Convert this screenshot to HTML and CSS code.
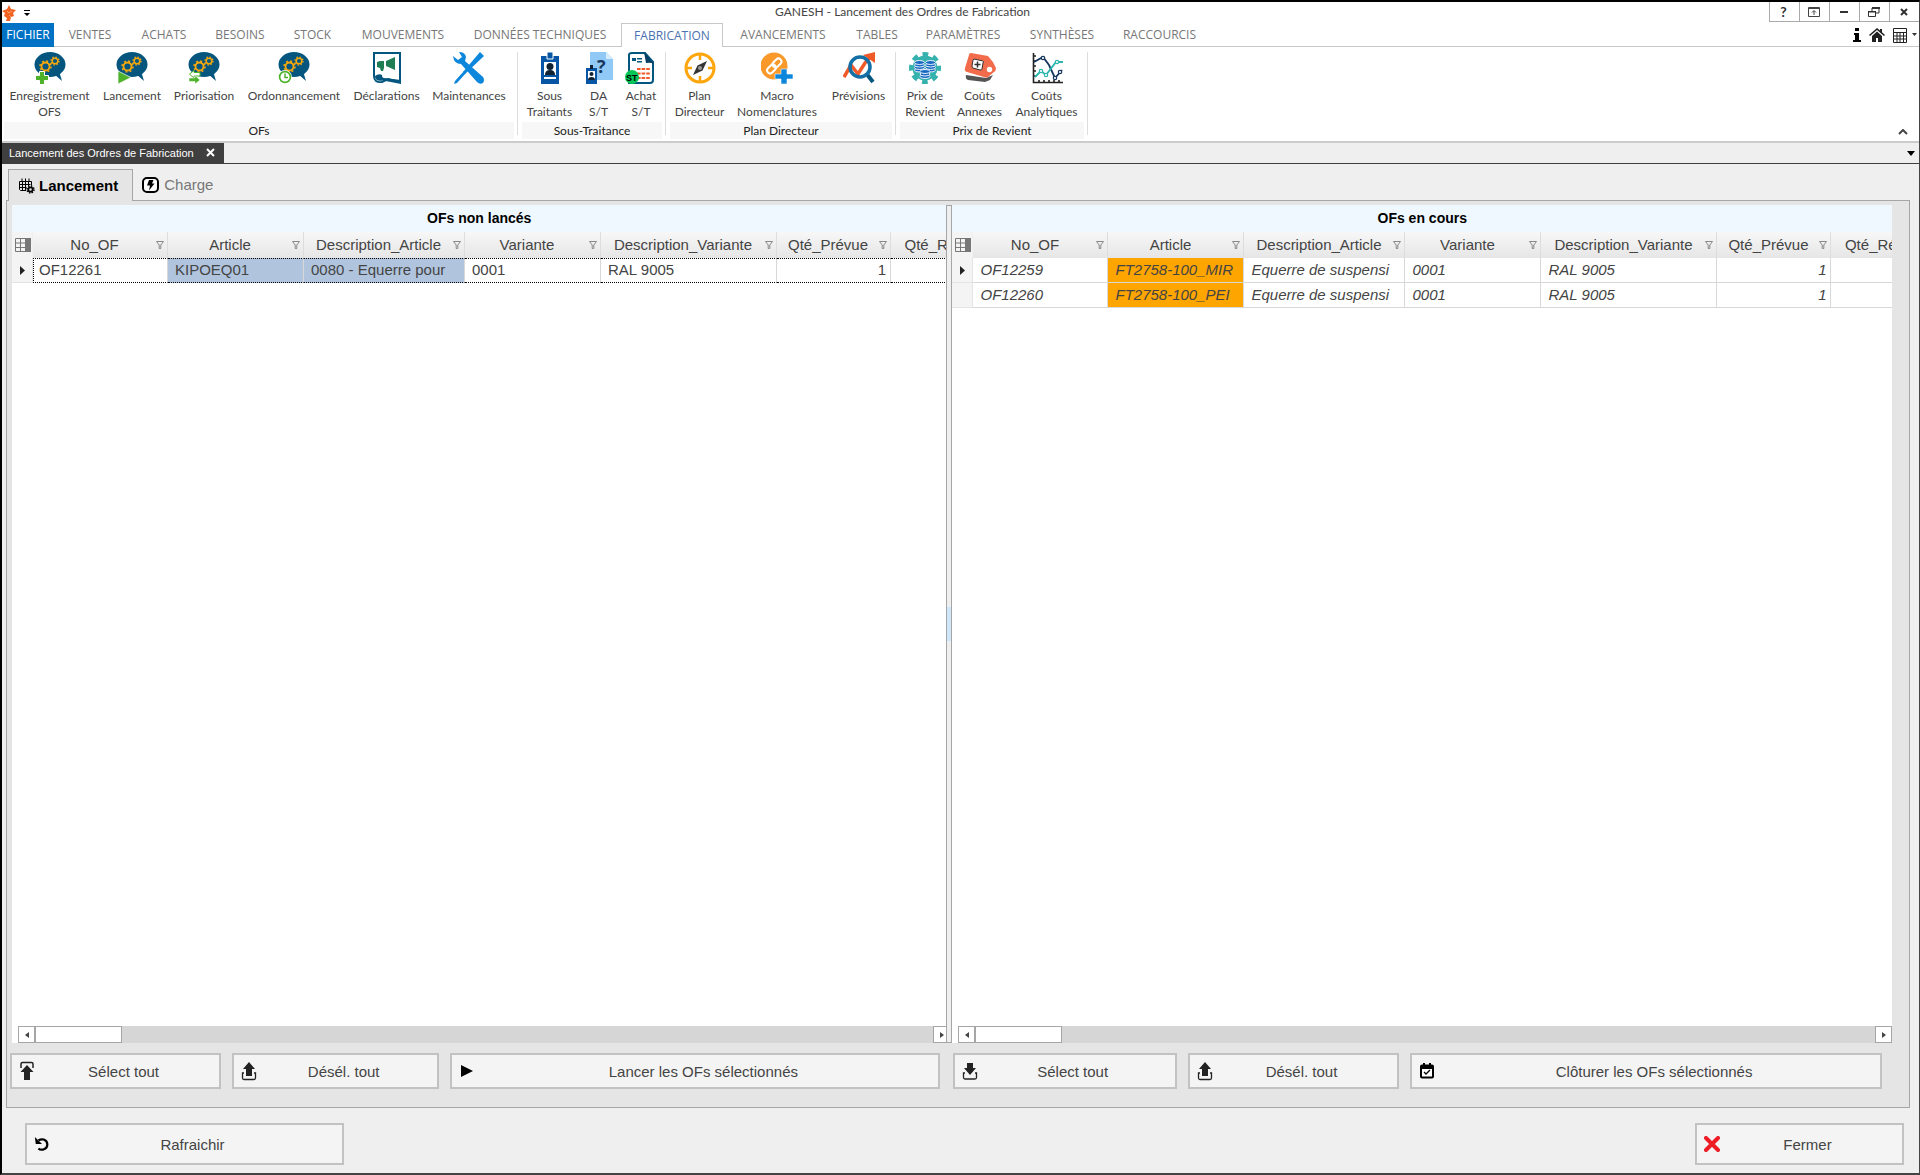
FILE: index.html
```html
<!DOCTYPE html>
<html lang="fr">
<head>
<meta charset="utf-8">
<title>GANESH - Lancement des Ordres de Fabrication</title>
<link rel="stylesheet" href="styles.css">
</head>
<body>
<svg class="defs" aria-hidden="true">
  <symbol id="bubble" viewBox="0 0 32 32">
    <ellipse cx="16" cy="12.500" rx="15.500" ry="12.500" fill="#04567f"/>
    <path d="M20 22l8 7-3-10z" fill="#04567f"/>
    <g fill="none" stroke="#f9a80c"><circle cx="11.500" cy="14.500" r="4" stroke-width="1.800"/><circle cx="11.500" cy="14.500" r="5.500" stroke-width="1.500" stroke-dasharray="2 2.320"/><circle cx="21" cy="9" r="2.800" stroke-width="1.500"/><circle cx="21" cy="9" r="4" stroke-width="1.300" stroke-dasharray="1.500 1.640"/></g>
  </symbol>
  <symbol id="filter" viewBox="0 0 8 8"><path d="M.5.500h7L4.800 4v3.500H3.200V4z" fill="none" stroke="#888"/></symbol>
  <symbol id="grid" viewBox="0 0 16 14"><path d="M11 0h5v14h-5z" fill="#777"/><path d="M.5.500h14v13H.500zM.500 5h11M.500 9.500h11M5.500.500v13M10.500.500v13" fill="none" stroke="#777"/></symbol>
  <symbol id="up" viewBox="0 0 16 20"><path d="M8 1l6 7h-3v7H5V8H2z" fill="#222"/><path d="M3 12H1.500v5q0 1.500 1.500 1.500h10q1.500 0 1.500-1.500v-5H13" fill="none" stroke="#222" stroke-width="1.300"/></symbol>
</svg>
<div class="window">
  <header class="titlebar">
    <div class="quick">
      <svg width="14" height="16" viewBox="0 0 14 16"><path d="M7 0l2 4 5 1-3 3 1 3-3 1-1 4H4l1-3-3-2 1-3-3-2 5-2z" fill="#f26322"/><path d="M5 6l2 2 3-2M7 10l2 2" stroke="#fba06b" fill="none"/></svg>
      <svg width="6" height="6" viewBox="0 0 6 6"><path d="M0 0h6v1H0zM0 3h6L3 6z"/></svg>
    </div>
    <h1>GANESH - Lancement des Ordres de Fabrication</h1>
    <div class="winbtns">
      <button aria-label="Aide">?</button>
      <button aria-label="Options du ruban"><svg width="12" height="10" viewBox="0 0 12 10"><path d="M.5.500h11v9H.500zM.500 1.500h11M6 8V4M4 5.500l2-2 2 2" fill="none" stroke="#444"/></svg></button>
      <button aria-label="Réduire"><svg width="8" height="10"><path d="M0 4h8v2H0z" fill="#333"/></svg></button>
      <button aria-label="Restaurer"><svg width="12" height="10" viewBox="0 0 12 10"><path d="M.5 4.500h7v5h-7zM4 4V1h7v5H8" fill="none" stroke="#333"/><path d="M4 0h8v2H4zM0 4h8v1.500H0z" fill="#333"/></svg></button>
      <button aria-label="Fermer la fenêtre"><svg width="8" height="8"><path d="M1 1l6 6M7 1L1 7" stroke="#333" stroke-width="2"/></svg></button>
    </div>
  </header>

  <nav class="menu">
    <button class="file">FICHIER</button><button>VENTES</button><button>ACHATS</button><button>BESOINS</button><button>STOCK</button><button>MOUVEMENTS</button><button>DONNÉES TECHNIQUES</button><button class="active">FABRICATION</button><button>AVANCEMENTS</button><button>TABLES</button><button>PARAMÈTRES</button><button>SYNTHÈSES</button><button>RACCOURCIS</button>
    <div class="tools">
      <svg width="8" height="14" viewBox="0 0 8 14"><path d="M2 0h4v3H2zM1 5h5v7h2v2H0v-2h2V7H1z"/></svg>
      <svg width="16" height="14" viewBox="0 0 16 14"><path d="M8 0L0 7l1 1 7-6 7 6 1-1-3-2.700V1h-2v1.600z" fill="#222"/><path d="M8 3.500L3 8v6h4v-4h2v4h4V8z" fill="#222"/></svg>
      <svg width="14" height="15" viewBox="0 0 14 15"><path d="M.5.500h13v14H.500zM.500 4.500h13M.500 8h13M.500 11h13M4 4.500v10M7 4.500v10M10.500 4.500v10" fill="none" stroke="#222"/></svg>
      <svg class="caret" width="5" height="4"><path d="M0 0h5L2.500 3z" fill="#333"/></svg>
    </div>
  </nav>

  <section class="ribbon">
    <div class="group g-ofs">
      <div class="tiles">
        <button><svg class="ico" viewBox="0 0 32 32"><use href="#bubble"/><path d="M5.500 19.500h5v4h4v5h-4v4h-5v-4h-4v-5h4z" fill="#4eb32b" stroke="#fff"/></svg>Enregistrement<br>OFS</button>
        <button><svg class="ico" viewBox="0 0 32 32"><use href="#bubble"/><path d="M2 19l13 6.500L2 32z" fill="#4eb32b" stroke="#fff" stroke-width=".7"/></svg>Lancement</button>
        <button><svg class="ico" viewBox="0 0 32 32"><use href="#bubble"/><path d="M12 20.500H6v-2l-4.500 3.700L6 26v-2h6z" fill="#fff" stroke="#4eb32b"/><path d="M1 26h6v-2.500l5 4.500-5 4v-2.500H1z" fill="#4eb32b" stroke="#fff" stroke-width=".5"/></svg>Priorisation</button>
        <button><svg class="ico" viewBox="0 0 32 32"><use href="#bubble"/><circle cx="7" cy="25" r="6.900" fill="#fff"/><circle cx="7" cy="25" r="5.400" fill="#fff" stroke="#4eb32b" stroke-width="1.700"/><path d="M7 21.500V25.500h3" fill="none" stroke="#4eb32b" stroke-width="1.500"/></svg>Ordonnancement</button>
        <button><svg class="ico" viewBox="0 0 32 32"><path d="M3 1h26v29l-12-3-6 3q-8 1-8-6z" fill="#fff" stroke="#04567f" stroke-width="2"/><path d="M4 24q4-3 7-1 0 3 2 3l17 2v4l-18-3.500Q4 30 4 24z" fill="#04567f"/><path d="M9 9h4v7l-1 3h-2l-1-3-3-1V10zM15 9l9-4v13l-9-4z" fill="#1f7d53"/></svg>Déclarations</button>
        <button><svg class="ico" viewBox="0 0 32 32"><path d="M27 0l4 4-19 18-2-2z" fill="#0c87dc"/><path d="M11 19l2 2L4 31l-3 1 1-3zM6 0q6 0 7 5l-1 4 18 16q2 3 0 6-3 2-6-1L8 12Q1 12 0 4l5 4 4-3z" fill="#0c87dc"/></svg>Maintenances</button>
      </div>
      <h2>OFs</h2>
    </div>
    <div class="group g-st">
      <div class="tiles">
        <button><svg class="ico" viewBox="0 0 32 32"><path d="M7 4h18v28H7z" fill="#0756a5"/><path d="M10 10h12v17H10z" fill="#fff"/><path d="M11 23q0-5 5-5t5 5z" fill="#123"/><circle cx="16" cy="14.500" r="3.500" fill="#123"/><path d="M8 23h16v2H8zM10 27h12v2H10z" fill="#0756a5"/><path d="M13 0h6v7h-6z" fill="#0756a5" stroke="#fff"/></svg>Sous<br>Traitants</button>
        <button><svg class="ico" viewBox="0 0 32 32"><path d="M7 0h16l7 7v21H7z" fill="#90c8f6"/><path d="M23 0l7 7h-7z" fill="#d5ecff"/><text x="14" y="21" class="glyph">?</text><path d="M3 16h11v16H3z" fill="#0756a5"/><path d="M5 19h7v9H5z" fill="#fff"/><circle cx="8.500" cy="22" r="2" fill="#123"/><path d="M5 28q0-3 3.500-3t3.500 3zM7 13h3v4H7z" fill="#123"/></svg>DA<br>S/T</button>
        <button><svg class="ico" viewBox="0 0 32 32"><path d="M4 31V3q0-2 3-2h13l8 9v18q0 3-3 3z" fill="#fff" stroke="#04567f" stroke-width="2"/><path d="M19 0l10 12q-3-2-8-1z" fill="#053f63"/><path d="M7 6h4v3H7zM12 6h5v1.500h-5zM12 9h5v1.500h-5z" fill="#04567f"/><path d="M12 17h13M12 21.500h13M12 26h13" stroke="#f05a28" stroke-width="2.200" stroke-dasharray="3.600 1"/><circle cx="7" cy="25" r="7" fill="#06c755"/><text x="1" y="29" class="st">ST</text></svg>Achat<br>S/T</button>
      </div>
      <h2>Sous-Traitance</h2>
    </div>
    <div class="group g-pd">
      <div class="tiles">
        <button><svg class="ico" viewBox="0 0 32 32"><circle cx="16" cy="16" r="14" fill="#fff" stroke="#fca60b" stroke-width="3"/><path d="M16 3v5M16 24v5M3 16h5M24 16h5" stroke="#fca60b" stroke-width="2.500"/><path d="M23 9l-4.500 9.500L9 23l4.500-9.500z" fill="#333"/><circle cx="16" cy="16" r="2" fill="#999"/></svg>Plan<br>Directeur</button>
        <button><svg class="ico" viewBox="0 0 32 32"><circle cx="13" cy="14" r="13.500" fill="#f8992a"/><g fill="none" stroke="#fff" stroke-width="2"><rect x="-5" y="-3" width="10" height="6" rx="3" transform="translate(10.500 17) rotate(-45)"/><rect x="-5" y="-3" width="10" height="6" rx="3" transform="translate(16 11) rotate(-45)"/></g><path d="M20 17h6v5h6v5h-6v5h-6v-5h-6v-5h6z" fill="#0c87dc" stroke="#fff" stroke-width=".6"/></svg>Macro<br>Nomenclatures</button>
        <button><svg class="ico" viewBox="0 0 32 32"><path d="M1 25l7-12 7 9 7-11 5-6" fill="none" stroke="#f05a28" stroke-width="3.500"/><path d="M20 3l12-3v11z" fill="#f05a28"/><path d="M23 21l7 9" stroke="#04567f" stroke-width="4"/><circle cx="17" cy="15" r="10" fill="none" stroke="#146fa5" stroke-width="3.500"/></svg>Prévisions</button>
      </div>
      <h2>Plan Directeur</h2>
    </div>
    <div class="group g-pr">
      <div class="tiles">
        <button><svg class="ico" viewBox="0 0 32 32"><circle cx="16" cy="16" r="12.500" fill="#36b2ae"/><circle cx="16" cy="16" r="13.500" fill="none" stroke="#36b2ae" stroke-width="5" stroke-dasharray="5.600 5" stroke-dashoffset="2.800"/><g fill="#1769c2" stroke="#fff" stroke-width=".9"><ellipse cx="10.500" cy="18" rx="5" ry="2"/><ellipse cx="10.500" cy="15.500" rx="5" ry="2"/><ellipse cx="10.500" cy="13" rx="5" ry="2"/><ellipse cx="10.500" cy="10.500" rx="5" ry="2"/><ellipse cx="21.500" cy="18" rx="5" ry="2"/><ellipse cx="21.500" cy="15.500" rx="5" ry="2"/><ellipse cx="21.500" cy="13" rx="5" ry="2"/><ellipse cx="21.500" cy="10.500" rx="5" ry="2"/><ellipse cx="16" cy="24.500" rx="5" ry="2"/><ellipse cx="16" cy="22" rx="5" ry="2"/><ellipse cx="16" cy="19.500" rx="5" ry="2"/></g></svg>Prix de<br>Revient</button>
        <button><svg class="ico" viewBox="0 0 32 32"><path d="M2 23l20 3 7-3-3 5-5 2-17-2q-3-1-2-5z" fill="#555"/><path d="M7 1l17 3q5 5 8 12 0 3-2 4l-6 5q-2 1-4 0L3 20q-3-1-2-4L5 3q0-2 2-2z" fill="#f26b4a"/><path d="M10 7l9 2q1 0 0 2l-1 6q0 1-2 1l-7-2q-1 0-1-2l1-6z" fill="#fff" stroke="#333"/><path d="M13.500 9.500v6M10.500 12.500h6" stroke="#333" stroke-width="1.500"/><circle cx="25.500" cy="17.500" r="2.700" fill="#fff"/></svg>Coûts<br>Annexes</button>
        <button><svg class="ico" viewBox="0 0 32 32"><path d="M2.500 1v29.500H32M2 4h3M2 9h3M2 14h3M2 19h3M2 24h3M8 31v-3M13 31v-3M18 31v-3M23 31v-3M28 31v-3" fill="none" stroke="#222" stroke-width="1.600"/><path d="M3 10l9-5 6 8 6 13 7-8" fill="none" stroke="#17375e" stroke-width="1.800"/><path d="M4 25l6-6 5 4 10-13h7" fill="none" stroke="#2ab5ae" stroke-width="1.800"/><g fill="#fff" stroke="#17375e" stroke-width="1.200"><circle cx="12" cy="6" r="1.700"/><circle cx="24" cy="26" r="1.700"/><circle cx="29" cy="20" r="1.700"/></g><g fill="#fff" stroke="#2ab5ae" stroke-width="1.200"><circle cx="10" cy="19" r="1.700"/><circle cx="15" cy="23" r="1.700"/><circle cx="26" cy="10" r="1.700"/></g></svg>Coûts<br>Analytiques</button>
      </div>
      <h2>Prix de Revient</h2>
    </div>
    <button class="collapse" aria-label="Réduire le ruban"><svg width="10" height="6"><path d="M1 5l4-4 4 4" fill="none" stroke="#444" stroke-width="2"/></svg></button>
  </section>

  <div class="docbar">
    <button class="doctab">Lancement des Ordres de Fabrication<svg width="10" height="10"><path d="M1 1l7 7M8 1L1 8" stroke="#fff" stroke-width="2"/></svg></button>
    <svg width="8" height="5"><path d="M0 0h8L4 5z"/></svg>
  </div>

  <main>
    <div class="tabs">
      <button class="tab on"><svg width="17" height="16" viewBox="0 0 17 16"><path d="M8 12.500H2.500l-1-1v-8h12v4M1.500 6.500h11M1.500 9.500h7M4.500 4v8M7.500 4v8M10.500 4v4M4 .500v3M7.500.500v3M11 .500v3" fill="none" stroke="#000"/><circle cx="12.500" cy="11.500" r="2.200" fill="none" stroke="#000" stroke-width="1.800"/><circle cx="12.500" cy="11.500" r="3.500" fill="none" stroke="#000" stroke-width="1.500" stroke-dasharray="1.400 1.350"/></svg>Lancement</button>
      <button class="tab"><svg width="17" height="16" viewBox="0 0 17 16"><rect x="1" y="1" width="15" height="14" rx="4" fill="#fff" stroke="#000" stroke-width="2"/><path d="M7 3h4.500L10 6.500h2.500L7 13.500l1-5H5z"/></svg>Charge</button>
    </div>
    <div class="panel">
      <div class="split">
        <section class="pane">
          <h3>OFs non lancés</h3>
          <div class="gridbox">
            <table class="data picked">
              <colgroup><col class="c-sel"><col class="c-of"><col class="c-art"><col class="c-desc"><col class="c-art"><col class="c-dv"><col class="c-qty"><col class="c-qty"></colgroup>
              <thead><tr><th><svg class="gi"><use href="#grid"/></svg></th>
                <th><div><span>No_OF</span><svg class="fi"><use href="#filter"/></svg></div></th>
                <th><div><span>Article</span><svg class="fi"><use href="#filter"/></svg></div></th>
                <th><div><span>Description_Article</span><svg class="fi"><use href="#filter"/></svg></div></th>
                <th><div><span>Variante</span><svg class="fi"><use href="#filter"/></svg></div></th>
                <th><div><span>Description_Variante</span><svg class="fi"><use href="#filter"/></svg></div></th>
                <th><div><span>Qté_Prévue</span><svg class="fi"><use href="#filter"/></svg></div></th>
                <th><div><span>Qté_Réelle</span><svg class="fi"><use href="#filter"/></svg></div></th></tr></thead>
              <tbody><tr><td class="rowsel"><svg width="5" height="9"><path d="M0 0l5 4.500L0 9z" fill="#222"/></svg></td><td>OF12261</td><td class="blue">KIPOEQ01</td><td class="blue">0080 - Equerre pour</td><td>0001</td><td>RAL 9005</td><td class="num">1</td><td></td></tr></tbody>
            </table>
          </div>
          <div class="scroll tucked"><button aria-label="Défiler à gauche"><svg width="4" height="6"><path d="M4 0v6L0 3z" fill="#444"/></svg></button><i class="thumb"></i><button class="end" aria-label="Défiler à droite"><svg width="4" height="6"><path d="M0 0v6l4-3z" fill="#444"/></svg></button></div>
        </section>
        <div class="splitter"><i></i></div>
        <section class="pane">
          <h3>OFs en cours</h3>
          <div class="gridbox">
            <table class="data running">
              <colgroup><col class="c-sel"><col class="c-of"><col class="c-art"><col class="c-desc"><col class="c-art"><col class="c-dv"><col class="c-qty"><col class="c-qty"></colgroup>
              <thead><tr><th><svg class="gi"><use href="#grid"/></svg></th>
                <th><div><span>No_OF</span><svg class="fi"><use href="#filter"/></svg></div></th>
                <th><div><span>Article</span><svg class="fi"><use href="#filter"/></svg></div></th>
                <th><div><span>Description_Article</span><svg class="fi"><use href="#filter"/></svg></div></th>
                <th><div><span>Variante</span><svg class="fi"><use href="#filter"/></svg></div></th>
                <th><div><span>Description_Variante</span><svg class="fi"><use href="#filter"/></svg></div></th>
                <th><div><span>Qté_Prévue</span><svg class="fi"><use href="#filter"/></svg></div></th>
                <th><div><span>Qté_Réelle</span><svg class="fi"><use href="#filter"/></svg></div></th></tr></thead>
              <tbody>
                <tr><td class="rowsel"><svg width="5" height="9"><path d="M0 0l5 4.500L0 9z" fill="#222"/></svg></td><td>OF12259</td><td class="orange">FT2758-100_MIR</td><td>Equerre de suspensi</td><td>0001</td><td>RAL 9005</td><td class="num">1</td><td></td></tr>
                <tr><td class="rowsel"></td><td>OF12260</td><td class="orange">FT2758-100_PEI</td><td>Equerre de suspensi</td><td>0001</td><td>RAL 9005</td><td class="num">1</td><td></td></tr>
              </tbody>
            </table>
          </div>
          <div class="scroll"><button aria-label="Défiler à gauche"><svg width="4" height="6"><path d="M4 0v6L0 3z" fill="#444"/></svg></button><i class="thumb"></i><button class="end" aria-label="Défiler à droite"><svg width="4" height="6"><path d="M0 0v6l4-3z" fill="#444"/></svg></button></div>
        </section>
      </div>
      <div class="actions">
        <div class="set left">
          <button class="btn"><svg width="16" height="20" viewBox="0 0 16 20"><path d="M8 4l6.500 7H11v8H5v-8H1.500z" fill="#222"/><path d="M2 7V3q0-1.500 1.500-1.500h9Q14 1.500 14 3v4" fill="none" stroke="#222" stroke-width="1.500"/></svg><span>Sélect tout</span></button>
          <button class="btn"><svg width="16" height="20"><use href="#up"/></svg><span>Désél. tout</span></button>
          <button class="btn"><svg width="16" height="20"><path d="M2 4l12 6-12 6z"/></svg><span>Lancer les OFs sélectionnés</span></button>
        </div>
        <div class="set right">
          <button class="btn"><svg width="16" height="20" viewBox="0 0 16 20"><path d="M5 2h6v5h3l-6 7-6-7h3z" fill="#222"/><path d="M3 12H1.500v4.500Q1.500 18 3 18h10q1.500 0 1.500-1.500V12H13" fill="none" stroke="#222" stroke-width="1.300"/></svg><span>Sélect tout</span></button>
          <button class="btn"><svg width="16" height="20"><use href="#up"/></svg><span>Désél. tout</span></button>
          <button class="btn"><svg width="16" height="20" viewBox="0 0 16 20"><rect x="2" y="4.500" width="12" height="12" rx="1" fill="#fff" stroke="#000" stroke-width="2"/><path d="M2 4h12v4H2zM4 2h2v4H4zM10 2h2v4h-2z"/><path d="M5 11l2 2 4-4" fill="none" stroke="#000" stroke-width="1.300"/></svg><span>Clôturer les OFs sélectionnés</span></button>
        </div>
      </div>
    </div>
    <footer>
      <button class="btn refresh"><svg width="16" height="18" viewBox="0 0 18 18"><path d="M5 5Q8 3 11 4q4 1.500 4 5.500t-4 5.500q-4 1-6-1" fill="none" stroke="#000" stroke-width="2.500"/><path d="M1 1l1 8h7z"/></svg><span>Rafraichir</span></button>
      <button class="btn close"><svg width="16" height="16"><path d="M2 2l12 12M14 2L2 14" stroke="#ee1c25" stroke-width="4" stroke-linecap="round"/></svg><span>Fermer</span></button>
    </footer>
  </main>
</div>
</body>
</html>
```
FILE: styles.css
```css
* { box-sizing: border-box; }
body { margin: 0; background: #efefef; font-family: "Liberation Sans", Arial, sans-serif; color: #444; }
button { margin: 0; padding: 0; border: 0; background: none; font: inherit; color: inherit; }
h1, h2, h3 { margin: 0; font-weight: normal; }
svg { display: block; flex: none; }
.defs { position: absolute; width: 0; height: 0; }

.window { display: flex; flex-direction: column; min-height: 100vh; border: solid #000; border-width: 2px 1px 2px 2px; border-right-color: #444; border-bottom-color: #444; }

.titlebar { display: grid; grid-template-columns: 1fr auto 1fr; height: 21px; background: #fff; font: 12px/20px Lato, sans-serif; }
.titlebar h1 { font-size: 12px; padding-right: 116px; }
.quick { display: flex; align-items: center; gap: 8px; }
.winbtns { display: flex; justify-content: flex-end; height: 20px; }
.winbtns button { display: grid; place-items: center; width: 30px; padding-right: 2px; border: solid #aaa; border-width: 0 0 1px 1px; font-weight: bold; font-size: 14px; color: #333; }

.menu { display: grid; grid-template-columns: 52px 72px 76px 76px 69px 112px 162px 102px 120px 68px 104px 94px 101px 1fr; height: 24px; background: linear-gradient(#c8c8c8, #c8c8c8) bottom / 100% 1px no-repeat #fff; font: 12px/22px "Open Sans", sans-serif; color: #777; }
.menu button { white-space: nowrap; }
.menu .file { background: #0072c6; color: #fff; }
.menu .active { border: 1px solid #c8c8c8; border-bottom: 0; background: #fff; color: #4a72b0; line-height: 20px; }
.tools { display: flex; align-items: center; justify-content: flex-end; gap: 8px; padding-right: 2px; }
.tools .caret { margin-left: -3px; }

.ribbon { display: flex; align-items: flex-start; height: 96px; padding: 5px 0 2px 2px; background: #fff; border-bottom: 2px solid #cbcdcc; font: 12px/16px Lato, sans-serif; }
.group { display: flex; flex-direction: column; height: 87px; margin-right: 8px; position: relative; }
.group::after { content: ""; position: absolute; right: -4px; top: 0; bottom: 4px; width: 1px; background: #ddd; }
.tiles { display: grid; flex: 1; }
.tiles button { display: block; align-self: start; text-align: center; white-space: nowrap; }
.ico { width: 32px; height: 32px; margin: 0 auto 4px; }
.glyph { font: bold 18px "Open Sans", sans-serif; fill: #17375e; }
.st { font: bold 9px "Liberation Sans", sans-serif; fill: #000; }
.group h2 { background: #f7f7f7; height: 17px; font-size: 12px; line-height: 17px; text-align: center; color: #222; }
.g-ofs .tiles { grid-template-columns: 91px 74px 70px 110px 75px 90px; }
.g-st .tiles { grid-template-columns: 55px 43px 42px; }
.g-pd .tiles { grid-template-columns: 59px 96px 67px; }
.g-pr .tiles { grid-template-columns: 50px 59px 75px; }
.collapse { align-self: flex-end; margin-left: auto; padding: 0 11px 4px; }

.docbar { display: flex; justify-content: space-between; align-items: center; height: 21px; padding-right: 4px; border-bottom: 1px solid #3f3f3f; }
.doctab { display: flex; align-items: center; gap: 12px; align-self: stretch; padding: 0 8px 0 7px; background: #3f3f3f; color: #fff; font-size: 11px; }

main { display: flex; flex-direction: column; flex: 1; padding: 5px 9px 8px 4px; font-size: 15px; }
.tabs { display: flex; padding-left: 2px; }
.tab { display: flex; align-items: center; gap: 5px; height: 31px; padding: 0 9px; color: #777; }
.tab.on { gap: 4px; padding: 0 14px 0 9px; border: 1px solid #a6a6a6; border-bottom: 0; background: #e5e5e5; color: #000; font-weight: bold; margin-bottom: -1px; height: 32px; z-index: 1; }
.panel { display: flex; flex-direction: column; flex: 1; border: 1px solid #a6a6a6; background: #e5e5e5; padding: 4px 17px 18px 3px; }
.split { display: grid; grid-template-columns: minmax(0, 934fr) 6px minmax(0, 939fr); flex: 1; padding-left: 2px; }
.pane { display: flex; flex-direction: column; background: #fff; overflow: hidden; }
.pane h3 { height: 27px; background: #f0f8ff; color: #000; font-size: 14px; line-height: 27px; font-weight: bold; text-align: center; }
.splitter { display: flex; align-items: center; border: 1px solid #a6a6a6; background: #efefef; }
.splitter i { flex: 1; height: 34px; background: #cfe5f8; }
.gridbox { flex: 1; overflow: hidden; }
.data { table-layout: fixed; width: 993px; border-collapse: separate; border-spacing: 0; line-height: 22px; }
.c-sel { width: 21px; } .c-of { width: 135px; } .c-art { width: 136px; } .c-desc { width: 161px; } .c-dv { width: 176px; } .c-qty { width: 114px; }
.data th { padding: 0; height: 26px; font-weight: normal; border-right: 1px solid #ddd; background: linear-gradient(#f7f7f7, #e6e6e6); }
.data th:first-child { border-color: #f0f0f0; background: #f4f4f4; }
.data th div { display: flex; align-items: center; padding: 0 3px 0 0; }
.data th span { flex: 1; text-align: center; }
.gi { width: 16px; height: 14px; margin-left: 3px; }
.fi { width: 8px; height: 8px; }
.data td { height: 25px; padding: 0 7px 1px; border-right: 1px solid #d8d8d8; border-bottom: 1px solid #d8d8d8; white-space: nowrap; overflow: hidden; }
.data .rowsel { padding: 0 0 0 8px; background: #f4f4f4; border-color: #e4e4e4; }
.data .num { text-align: right; padding-right: 4px; }
.picked td:not(.rowsel) { border-top: 1px dotted #000; border-bottom: 1px dotted #000; }
.picked td:nth-child(2) { border-left: 1px dotted #000; padding-left: 5px; }
.data .blue { background: #b0c4de; }
.data .orange { background: #ffa500; }
.running td { font-style: italic; }
.scroll { display: flex; height: 17px; margin-left: 6px; background: #d6d6d6; }
.scroll.tucked { margin-right: -4px; }
.scroll button { display: grid; place-items: center; width: 17px; background: #fff; border: 1px solid #a6a6a6; }
.scroll .end { margin-left: auto; }
.thumb { width: 87px; background: #fff; border: 1px solid #a6a6a6; }

.actions { display: grid; grid-template-columns: 942fr 939fr; margin-top: 10px; }
.set { display: grid; }
.left { grid-template-columns: 211fr 207fr 490fr; column-gap: 11px; margin-right: 12px; }
.right { grid-template-columns: 224fr 211fr 471fr; column-gap: 11px; margin-right: 10px; }
.btn { display: flex; align-items: center; height: 36px; padding: 0 7px; border: 2px solid #c2c2c2; background: #f4f4f4; }
.btn span { flex: 1; text-align: center; }
footer { display: flex; justify-content: space-between; padding: 15px 6px 0 19px; }
footer .btn { height: 42px; }
.refresh { width: 319px; }
.close { width: 209px; }
```
